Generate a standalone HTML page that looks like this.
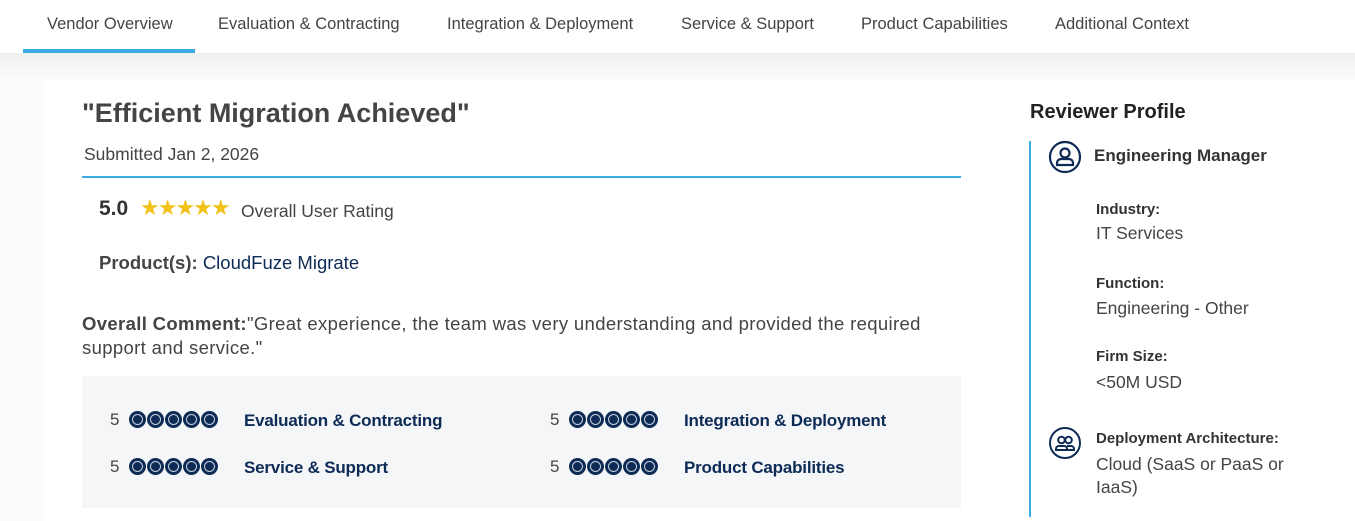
<!DOCTYPE html>
<html><head><style>
*{margin:0;padding:0;box-sizing:border-box}
body{width:1355px;height:517px;overflow:hidden;font-family:"Liberation Sans",sans-serif;background:#fff;position:relative;color:#333}
.hdr{position:absolute;left:0;top:0;width:1355px;height:53px;background:#fff}
.tab{position:absolute;top:15px;font-size:16.5px;color:#444;white-space:nowrap}
.ul{position:absolute;left:23px;top:49px;width:172px;height:4px;background:#3aaee0}
.grad{position:absolute;left:0;top:53px;width:1355px;height:30px;background:linear-gradient(#efefef,#fdfdfd)}
.side{position:absolute;left:0;top:81px;width:43px;height:440px;background:#fcfcfc}
.main{position:absolute;left:43px;top:81px;width:1312px;height:440px;background:#fff}
.a{position:absolute;white-space:nowrap}
.dots{display:inline-flex;gap:1px}
.dot{width:17px;height:17px;border-radius:50%;background:#0d2b55;position:relative}
.dot:after{content:"";position:absolute;left:3px;top:3px;width:11px;height:11px;border-radius:50%;border:1.5px solid #c9d3e0;box-sizing:border-box}
.cat{color:#0d2b55;font-size:17px;font-weight:bold;letter-spacing:-0.2px}
.lbl{font-size:15px;font-weight:bold;color:#333}
.val{font-size:17.5px;color:#444}
</style></head><body>
<div class="hdr">
<div class="tab" style="left:47px">Vendor Overview</div>
<div class="tab" style="left:218px">Evaluation &amp; Contracting</div>
<div class="tab" style="left:447px">Integration &amp; Deployment</div>
<div class="tab" style="left:681px">Service &amp; Support</div>
<div class="tab" style="left:861px">Product Capabilities</div>
<div class="tab" style="left:1055px">Additional Context</div>
<div class="ul"></div>
</div>
<div class="grad"></div>
<div class="side"></div>
<div class="main"></div>
<div class="a" style="left:82px;top:98px;font-size:27px;font-weight:bold;color:#444">"Efficient Migration Achieved"</div>
<div class="a" style="left:84px;top:144px;font-size:17.5px;color:#444">Submitted Jan 2, 2026</div>
<div class="a" style="left:82px;top:176px;width:879px;height:2px;background:#3aaee0"></div>
<div class="a" style="left:99px;top:197px;font-size:21px;font-weight:bold;color:#333">5.0</div>
<div class="a" style="left:140px;top:195px;font-size:22px;color:#f2c21b;letter-spacing:-2px">★★★★★</div>
<div class="a" style="left:241px;top:201px;font-size:17.5px;color:#444">Overall User Rating</div>
<div class="a" style="left:99px;top:252px;font-size:18.5px"><b style="color:#444">Product(s):</b> <span style="color:#0d2b55">CloudFuze Migrate</span></div>
<div class="a" style="left:82px;top:312px;width:900px;font-size:18.5px;line-height:24px;color:#444;letter-spacing:0.35px"><b>Overall Comment:</b>"Great experience, the team was very understanding and provided the required<br>support and service."</div>
<div class="a" style="left:82px;top:376px;width:879px;height:132px;background:#f4f6f8"></div>
<div class="a" style="left:110px;top:410px;font-size:17px;color:#444">5</div>
<div class="a dots" style="left:129px;top:411px"><i class="dot"></i><i class="dot"></i><i class="dot"></i><i class="dot"></i><i class="dot"></i></div>
<div class="a cat" style="left:244px;top:411px">Evaluation &amp; Contracting</div>
<div class="a" style="left:110px;top:457px;font-size:17px;color:#444">5</div>
<div class="a dots" style="left:129px;top:458px"><i class="dot"></i><i class="dot"></i><i class="dot"></i><i class="dot"></i><i class="dot"></i></div>
<div class="a cat" style="left:244px;top:458px">Service &amp; Support</div>
<div class="a" style="left:550px;top:410px;font-size:17px;color:#444">5</div>
<div class="a dots" style="left:569px;top:411px"><i class="dot"></i><i class="dot"></i><i class="dot"></i><i class="dot"></i><i class="dot"></i></div>
<div class="a cat" style="left:684px;top:411px">Integration &amp; Deployment</div>
<div class="a" style="left:550px;top:457px;font-size:17px;color:#444">5</div>
<div class="a dots" style="left:569px;top:458px"><i class="dot"></i><i class="dot"></i><i class="dot"></i><i class="dot"></i><i class="dot"></i></div>
<div class="a cat" style="left:684px;top:458px">Product Capabilities</div>

<div class="a" style="left:1030px;top:101px;font-size:20px;font-weight:bold;color:#222">Reviewer Profile</div>
<div class="a" style="left:1029px;top:141px;width:2px;height:376px;background:#3aaee0"></div>
<svg class="a" style="left:1048px;top:140px" width="34" height="34" viewBox="0 0 34 34" fill="none" stroke="#0d2b55" stroke-width="2.2"><circle cx="17" cy="17" r="15"/><circle cx="17" cy="13" r="4.5"/><path d="M9 25v-2a4 4 0 0 1 4-4h8a4 4 0 0 1 4 4v2z"/></svg>
<div class="a" style="left:1094px;top:146px;font-size:17px;font-weight:bold;color:#333">Engineering Manager</div>
<div class="a lbl" style="left:1096px;top:201px">Industry:</div>
<div class="a val" style="left:1096px;top:223px">IT Services</div>
<div class="a lbl" style="left:1096px;top:275px">Function:</div>
<div class="a val" style="left:1096px;top:298px">Engineering - Other</div>
<div class="a lbl" style="left:1096px;top:348px">Firm Size:</div>
<div class="a val" style="left:1096px;top:372px">&lt;50M USD</div>
<svg class="a" style="left:1048px;top:426px" width="34" height="34" viewBox="0 0 34 34" fill="none" stroke="#0d2b55" stroke-width="2"><circle cx="17" cy="17" r="15"/><circle cx="13.5" cy="14" r="3.3"/><circle cx="20.5" cy="14" r="3.3"/><path d="M8 23a3 3 0 0 1 3-3h5a3 3 0 0 1 3 3v1H8z"/><path d="M19 20h4a3 3 0 0 1 3 3v1h-7"/></svg>
<div class="a lbl" style="left:1096px;top:430px">Deployment Architecture:</div>
<div class="a val" style="left:1096px;top:453px;white-space:normal;width:210px;line-height:23px">Cloud (SaaS or PaaS or IaaS)</div>
</body></html>
